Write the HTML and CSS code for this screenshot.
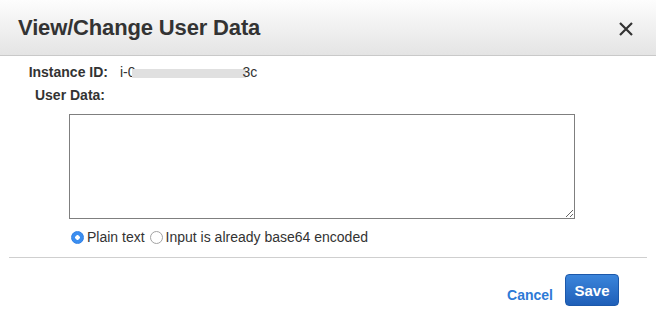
FILE: index.html
```html
<!DOCTYPE html>
<html lang="en">
  <head>
    <meta charset="UTF-8" />
    <meta name="viewport" content="width=device-width, initial-scale=1.0" />
    <title>View/Change User Data</title>
    <link rel="stylesheet" href="styles.css">
  </head>
  <body>
    <div class="modal">
      <div class="header">
        <h1 class="title">View/Change User Data</h1>
        <button class="close" aria-label="Close">
          <svg width="14" height="14" viewBox="0 0 14 14">
            <path d="M1 1 L13 13 M13 1 L1 13" stroke="#333" stroke-width="2.2" fill="none" />
          </svg>
        </button>
      </div>

      <div class="content">
        <div class="row">
          <span class="label">Instance ID:</span>
          <span class="value">i-0<span class="redacted"></span>3c</span>
        </div>
        <div class="row">
          <span class="label labelShort">User Data:</span>
        </div>

        <textarea class="userData"></textarea>

        <div class="options">
          <label class="option">
            <input type="radio" name="encoding" checked />
            <span>Plain text</span>
          </label>
          <label class="option">
            <input type="radio" name="encoding" />
            <span>Input is already base64 encoded</span>
          </label>
        </div>
      </div>

      <div class="divider"></div>

      <div class="footer">
        <a href="#" class="cancel">Cancel</a>
        <button class="save">Save</button>
      </div>
    </div>
  </body>
</html>
```

FILE: styles.css
```css
* {
  margin: 0;
  padding: 0;
  box-sizing: border-box;
}

body {
  font-family: "Liberation Sans", Arial, sans-serif;
  font-size: 14px;
  color: #333;
  background: #fff;
}

.header {
  display: flex;
  justify-content: space-between;
  align-items: center;
  height: 56px;
  padding: 0 23px 0 18px;
  background: linear-gradient(#fdfdfd, #e4e4e4);
  border-bottom: 1px solid #c9c9c9;
}

.title {
  font-size: 22px;
  font-weight: bold;
  color: #333;
  letter-spacing: -0.15px;
}

.close {
  display: flex;
  border: none;
  background: none;
  margin-top: 3px;
}

.content {
  padding-top: 7px;
}

.row {
  display: flex;
  height: 18px;
  line-height: 18px;
  margin-bottom: 5px;
}

.label {
  width: 108px;
  text-align: right;
  font-weight: bold;
}

.labelShort {
  padding-right: 3px;
}

.value {
  margin-left: 12px;
}

.redacted {
  display: inline-block;
  width: 114px;
  height: 9px;
  margin: 0 -3px 0 -4px;
  background: #e0e0e0;
  vertical-align: -1px;
}

.userData {
  display: block;
  width: 506px;
  height: 105px;
  margin: 10px 0 0 69px;
  border: 1px solid #7f7f7f;
  font-family: inherit;
  font-size: 13px;
}

.options {
  display: flex;
  margin: 9px 0 0 71px;
  height: 18px;
  line-height: 18px;
}

.option {
  display: flex;
  align-items: center;
  margin-right: 5px;
}

.option input {
  appearance: none;
  width: 13px;
  height: 13px;
  margin-right: 3px;
  border: 1px solid #a3a3a3;
  border-radius: 50%;
  background: #fff;
}

.option input:checked {
  border-color: #2f7fe6;
  background: radial-gradient(circle, #fff 0 2px, #3b8ef0 2.5px);
}

.divider {
  margin: 11px 9px 0;
  border-top: 1px solid #cfcfcf;
}

.footer {
  display: flex;
  justify-content: flex-end;
  align-items: center;
  padding: 16px 37px 0 0;
}

.cancel {
  margin: 9px 12px 0 0;
  font-weight: bold;
  color: #2d7ad6;
  text-decoration: none;
}

.save {
  width: 54px;
  height: 32px;
  border: 1px solid #1c58aa;
  border-radius: 4px;
  background: linear-gradient(#3b85db, #1f5fb8);
  color: #fff;
  font-family: inherit;
  font-size: 15px;
  font-weight: bold;
}
```
